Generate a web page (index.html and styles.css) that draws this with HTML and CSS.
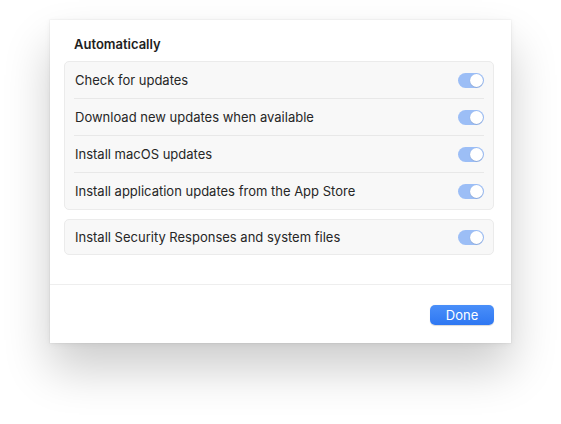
FILE: index.html
```html
<!DOCTYPE html>
<html>
<head>
<meta charset="utf-8">
<link rel="stylesheet" href="styles.css">
</head>
<body>
<div class="stage">
  <div class="sheet">
    <div class="content">
      <div class="heading">Automatically</div>
      <div class="group">
        <div class="row"><span>Check for updates</span><span class="toggle"><span class="knob"></span></span></div>
        <div class="row"><span>Download new updates when available</span><span class="toggle"><span class="knob"></span></span></div>
        <div class="row"><span>Install macOS updates</span><span class="toggle"><span class="knob"></span></span></div>
        <div class="row"><span>Install application updates from the App Store</span><span class="toggle"><span class="knob"></span></span></div>
      </div>
      <div class="group group-single">
        <div class="row"><span>Install Security Responses and system files</span><span class="toggle"><span class="knob"></span></span></div>
      </div>
    </div>
    <div class="footer">
      <button class="done">Done</button>
    </div>
  </div>
</div>
</body>
</html>
```

FILE: styles.css
```css
html, body {
  margin: 0;
  padding: 0;
  background: #ffffff;
}
body {
  min-height: 424px;
  font-family: "Inter", "Liberation Sans", sans-serif;
  font-size: 13px;
  color: #262626;
  -webkit-font-smoothing: antialiased;
}
.stage {
  padding: 20px 0 0 50px;
  height: 424px;
  box-sizing: border-box;
}
.sheet {
  width: 461px;
  height: 323px;
  background: #ffffff;
  box-shadow: 0 0 0 0.5px rgba(0,0,0,0.05), 0 1px 6px rgba(0,0,0,0.06), 0 26px 44px rgba(0,0,0,0.2);
  display: flex;
  flex-direction: column;
}
.content {
  padding: 16px 17px 0 14px;
  height: 265px;
  box-sizing: border-box;
  border-bottom: 1px solid #eeeeee;
}
.heading {
  font-weight: 600;
  line-height: 16px;
  padding-left: 10px;
  margin-bottom: 9px;
  color: #1e1e1e;
}
.group {
  background: #f8f8f8;
  border: 1px solid #ebebeb;
  border-radius: 5px;
  padding: 0 9px 0 9px;
}
.group-single {
  margin-top: 9px;
}
.row {
  height: 36px;
  display: flex;
  align-items: center;
  justify-content: space-between;
  border-bottom: 1px solid #e8e8e8;
  padding-left: 1px;
}
.row:last-child {
  border-bottom: none;
}
.group-single .row {
  height: 34px;
}
.toggle {
  width: 26px;
  height: 15px;
  border-radius: 8px;
  background: #9cbef6;
  display: flex;
  align-items: center;
  justify-content: flex-end;
  padding: 0 1px;
  box-sizing: border-box;
}
.knob {
  width: 13px;
  height: 13px;
  border-radius: 50%;
  background: #ffffff;
  box-shadow: 0 0.5px 1px rgba(0,0,0,0.2);
}
.footer {
  flex: 1;
  display: flex;
  justify-content: flex-end;
  align-items: flex-start;
  padding: 20px 17px 0 0;
}
.done {
  width: 64px;
  height: 20px;
  border: none;
  border-radius: 5px;
  background: linear-gradient(#4a8ff9, #2e77f2);
  color: #ffffff;
  font-family: "Inter", "Liberation Sans", sans-serif;
  font-size: 13px;
  padding: 0;
  box-shadow: 0 0.5px 1px rgba(0,0,0,0.15);
}
```
